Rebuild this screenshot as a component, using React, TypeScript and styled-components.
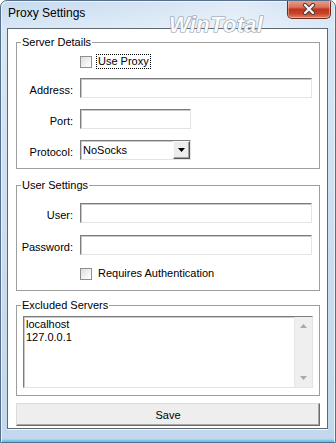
import styled, { createGlobalStyle } from "styled-components";

const GlobalStyle = createGlobalStyle`
  html, body {
    margin: 0;
    padding: 0;
    background: #ffffff;
  }
  body {
    font-family: "Liberation Sans", Arial, sans-serif;
    font-size: 11px;
    color: #000;
  }
`;

export default function App() {
  return (
    <>
      <GlobalStyle />
      <Window>
        <TitleBar>
          <Title>Proxy Settings</Title>
          <Watermark>WinTotal</Watermark>
          <CloseButton aria-label="Close">
            <svg width="16" height="12" viewBox="0 0 16 12">
              <path d="M4 2 L12 10 M12 2 L4 10" stroke="#4a3a38" strokeWidth="4.2" strokeLinecap="round" />
              <path d="M4 2 L12 10 M12 2 L4 10" stroke="#f4f4f4" strokeWidth="2.4" strokeLinecap="round" />
            </svg>
          </CloseButton>
        </TitleBar>
        <Frame>
          <Client>
            <Group>
              <Legend>Server Details</Legend>
              <Stack $gap={11} $top={5} $bottom={8}>
                <CheckRow>
                  <span />
                  <CheckLabel>
                    <Box />
                    <Focus>Use Proxy</Focus>
                  </CheckLabel>
                </CheckRow>
                <Row>
                  <Label>Address:</Label>
                  <Input />
                </Row>
                <Row>
                  <Label>Port:</Label>
                  <Input $width={111} />
                </Row>
                <Row>
                  <Label>Protocol:</Label>
                  <Select>
                    <SelectValue>NoSocks</SelectValue>
                    <DropButton>
                      <svg width="7" height="4" viewBox="0 0 7 4">
                        <path d="M0 0 H7 L3.5 4 Z" fill="#000" />
                      </svg>
                    </DropButton>
                  </Select>
                </Row>
              </Stack>
            </Group>

            <Group $space={10}>
              <Legend>User Settings</Legend>
              <Stack $gap={12} $top={11} $bottom={10}>
                <Row>
                  <Label>User:</Label>
                  <Input />
                </Row>
                <Row>
                  <Label>Password:</Label>
                  <Input />
                </Row>
                <CheckRow>
                  <span />
                  <CheckLabel>
                    <Box />
                    <CheckText>Requires Authentication</CheckText>
                  </CheckLabel>
                </CheckRow>
              </Stack>
            </Group>

            <Group $space={8}>
              <Legend>Excluded Servers</Legend>
              <ListWrap>
                <ListBox>
                  <ListText>
                    <div>localhost</div>
                    <div>127.0.0.1</div>
                  </ListText>
                  <ScrollBar>
                    <svg width="7" height="4" viewBox="0 0 7 4">
                      <path d="M0 4 H7 L3.5 0 Z" fill="#a9a9a9" />
                    </svg>
                    <svg width="7" height="4" viewBox="0 0 7 4">
                      <path d="M0 0 H7 L3.5 4 Z" fill="#a9a9a9" />
                    </svg>
                  </ScrollBar>
                </ListBox>
              </ListWrap>
            </Group>

            <SaveButton>Save</SaveButton>
          </Client>
        </Frame>
      </Window>
    </>
  );
}

const Window = styled.div`
  position: relative;
  width: 336px;
  height: 443px;
  box-sizing: border-box;
  display: flex;
  flex-direction: column;
  border: 1px solid #56708c;
  border-radius: 7px 7px 0 0;
  background: linear-gradient(180deg, #c5daef 0%, #d7e7f6 6%, #cadcee 60%, #c3d8ec 100%);
  box-shadow: inset 1px 1px 0 #e8f1fa, inset -1px 0 0 #e8f1fa, inset 0 -3px 2px -1px #5ec4ee;
  overflow: hidden;
`;

const TitleBar = styled.div`
  position: relative;
  height: 27px;
  display: flex;
  align-items: flex-start;
  background: linear-gradient(100deg, rgba(255, 255, 255, 0) 0%, rgba(255, 255, 255, 0.25) 45%, rgba(255, 255, 255, 0.45) 70%, rgba(255, 255, 255, 0.1) 100%);
`;

const Title = styled.div`
  padding: 5px 0 0 7px;
  font-family: "Liberation Sans", Arial, sans-serif;
  font-size: 12px;
  line-height: 15px;
  color: #000;
`;

const Watermark = styled.div`
  position: absolute;
  left: 168px;
  top: 13px;
  z-index: 2;
  font-family: "Liberation Sans", Arial, sans-serif;
  font-size: 22px;
  line-height: 22px;
  font-weight: bold;
  font-style: italic;
  color: rgba(255, 255, 255, 0.92);
  -webkit-text-stroke: 1.2px #8d9aa8;
  paint-order: stroke fill;
  letter-spacing: 0.3px;
  pointer-events: none;
`;

const CloseButton = styled.button`
  margin: -1px 4px 0 auto;
  width: 44px;
  height: 19px;
  padding: 0;
  display: flex;
  align-items: center;
  justify-content: center;
  border: 1px solid #6e2a1f;
  border-top: none;
  border-radius: 0 0 5px 5px;
  background: linear-gradient(180deg, #eaa592 0%, #d9705a 40%, #c0341c 52%, #c6442a 75%, #df8466 100%);
  box-shadow: inset 0 0 0 1px rgba(255, 255, 255, 0.35);
`;

const Frame = styled.div`
  flex: 1;
  display: flex;
  padding: 0 7px 13px 6px;
`;

const Client = styled.div`
  flex: 1;
  display: flex;
  flex-direction: column;
  padding: 7px 7px 2px 8px;
  background: #ffffff;
  border: 1px solid #5d6873;
  box-shadow: 0 1px 0 #f4f8fc;
`;

const Group = styled.fieldset<{ $space?: number }>`
  margin: ${(p) => p.$space ?? 0}px 0 0 0;
  padding: 0;
  min-width: 0;
  border: 1px solid #9e9e9e;
  background: #ffffff;
`;

const Legend = styled.legend`
  margin: 0 0 0 4px;
  padding: 0 1px;
  font-size: 11px;
  line-height: 13px;
`;

const Stack = styled.div<{ $gap: number; $top: number; $bottom: number }>`
  display: flex;
  flex-direction: column;
  gap: ${(p) => p.$gap}px;
  padding: ${(p) => p.$top}px 7px ${(p) => p.$bottom}px 0;
`;

const Row = styled.div`
  display: grid;
  grid-template-columns: 56px 1fr;
  column-gap: 7px;
  align-items: end;
`;

const CheckRow = styled(Row)`
  height: 13px;
  align-items: center;
`;

const Label = styled.div`
  text-align: right;
  line-height: 13px;
  padding-bottom: 1px;
`;

const Input = styled.div<{ $width?: number }>`
  box-sizing: border-box;
  height: 20px;
  width: ${(p) => (p.$width ? `${p.$width}px` : "100%")};
  background: #ffffff;
  border: 1px solid;
  border-color: #7c7c7c #e3e3e3 #e3e3e3 #7c7c7c;
  box-shadow: inset 1px 1px 0 #c9c9c9;
`;

const Select = styled(Input)`
  width: 111px;
  display: flex;
  align-items: center;
  justify-content: space-between;
`;

const SelectValue = styled.span`
  padding-left: 2px;
  line-height: 13px;
`;

const DropButton = styled.div`
  box-sizing: border-box;
  width: 17px;
  height: 100%;
  display: flex;
  align-items: center;
  justify-content: center;
  background: #ececec;
  border: 1px solid;
  border-color: #fafafa #555555 #555555 #fafafa;
  box-shadow: inset -1px -1px 0 #a0a0a0;
`;

const CheckLabel = styled.div`
  display: flex;
  align-items: center;
  gap: 4px;
  line-height: 13px;
`;

const Box = styled.div`
  box-sizing: border-box;
  width: 12px;
  height: 12px;
  border: 1px solid #8e8f8f;
  background: linear-gradient(135deg, #dcdcdc 0%, #f4f4f4 60%, #ffffff 100%);
`;

const Focus = styled.span`
  padding: 0 1px;
  border: 1px dotted #000;
`;

const CheckText = styled.span`
  padding-left: 2px;
`;

const ListWrap = styled.div`
  padding: 4px 6px 7px 6px;
`;

const ListBox = styled(Input)`
  height: 72px;
  display: flex;
`;

const ListText = styled.div`
  flex: 1;
  padding: 1px 0 0 2px;
  line-height: 13px;
`;

const ScrollBar = styled.div`
  width: 17px;
  display: flex;
  flex-direction: column;
  align-items: center;
  justify-content: space-between;
  padding: 7px 0 7px;
  background: #efefef;
  border-left: 1px solid #e6e6e6;
`;

const SaveButton = styled.button`
  margin-top: 7px;
  height: 23px;
  padding: 0;
  font-family: "Liberation Sans", Arial, sans-serif;
  font-size: 11px;
  color: #000;
  background: #eeeeee;
  border: 1px solid;
  border-color: #dcdcdc #6a6a6a #6a6a6a #dcdcdc;
  box-shadow: inset -1px -1px 0 #a8a8a8;
`;
